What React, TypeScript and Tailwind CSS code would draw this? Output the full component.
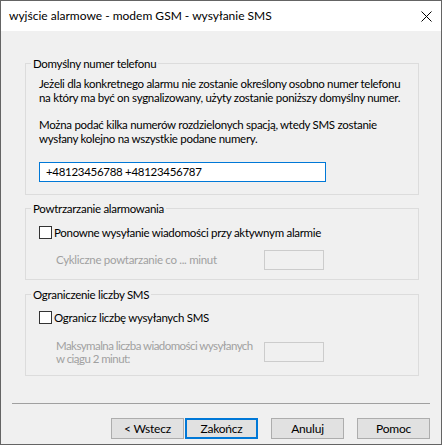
import React from "react";

const font = { fontFamily: 'Lato, "Noto Sans", sans-serif' };

function Checkbox() {
  return <span className="inline-block w-[13px] h-[13px] border border-[#333333] bg-white shrink-0" />;
}

function Btn({ label, primary }: { label: string; primary?: boolean }) {
  return (
    <button
      className={
        "w-[73px] h-[21px] flex items-center justify-center bg-[#e1e1e1] text-[12px] tracking-[-0.2px] text-black " +
        (primary ? "border-2 border-[#0078d7]" : "border border-[#adadad]")
      }
    >
      {label}
    </button>
  );
}

function Group({ title, className, children }: { title: string; className: string; children: React.ReactNode }) {
  return (
    <div className={"relative ml-[24px] w-[394px] border border-[#dcdcdc] pl-[13px] " + className}>
      <span className="absolute -top-[8px] left-[5px] px-[2px] leading-[15px] bg-[#f0f0f0]">{title}</span>
      {children}
    </div>
  );
}

export default function App() {
  return (
    <div
      className="w-[442px] h-[445px] overflow-hidden border border-[#646464] flex flex-col bg-[#f0f0f0] text-[11.5px] tracking-[-0.3px] text-black whitespace-nowrap"
      style={font}
    >
      <div className="h-[30px] shrink-0 bg-white flex items-center justify-between pl-[8px] pr-[9px]">
        <span className="text-[12px] tracking-normal">wyjście alarmowe - modem GSM - wysyłanie SMS</span>
        <svg width="11" height="11" viewBox="0 0 11 11">
          <path d="M0.5 0.5 L10.5 10.5 M10.5 0.5 L0.5 10.5" stroke="#000" strokeWidth="1" />
        </svg>
      </div>
      <div className="flex-1 flex flex-col">
        <Group title="Domyślny numer telefonu" className="mt-[32px] pt-[13px] pb-[12px]">
          <p className="leading-[14px]">
            Jeżeli dla konkretnego alarmu nie zostanie określony osobno numer telefonu
            <br />
            na który ma być on sygnalizowany, użyty zostanie poniższy domyślny numer.
          </p>
          <p className="mt-[13px] leading-[14px]">
            Można podać kilka numerów rozdzielonych spacją, wtedy SMS zostanie
            <br />
            wysłany kolejno na wszystkie podane numery.
          </p>
          <div className="mt-[16px] w-[287px] h-[20px] border border-[#0078d7] bg-white flex items-center pl-[6px]">
            +48123456788 +48123456787
          </div>
        </Group>

        <Group title="Powtrzarzanie alarmowania" className="mt-[13px] pt-[16px] pb-[9px]">
          <div className="h-[15px] flex items-center gap-[2px]">
            <Checkbox />
            <span>Ponowne wysyłanie wiadomości przy aktywnym alarmie</span>
          </div>
          <div className="mt-[10px] flex items-center">
            <span className="ml-[17px] w-[208px] text-[#a0a0a0] leading-[14px]">Cykliczne powtarzanie co ... minut</span>
            <div className="w-[60px] h-[20px] border border-[#cccccc] bg-[#f0f0f0]" />
          </div>
        </Group>

        <Group title="Ograniczenie liczby SMS" className="mt-[14px] pt-[15px] pb-[10px]">
          <div className="h-[15px] flex items-center gap-[2px]">
            <Checkbox />
            <span>Ogranicz liczbę wysyłanych SMS</span>
          </div>
          <div className="mt-[14px] flex items-center">
            <span className="ml-[17px] w-[208px] text-[#a0a0a0] leading-[13px] tracking-[-0.55px]">
              Maksymalna liczba wiadomości wysyłanych
              <br />
              w ciągu 2 minut:
            </span>
            <div className="w-[60px] h-[20px] border border-[#cccccc] bg-[#f0f0f0]" />
          </div>
        </Group>

        <div className="mt-[27px] ml-[11px] w-[418px] h-px bg-[#a0a0a0]" />

        <div className="mt-[14px] flex justify-end pr-[11px]">
          <Btn label="< Wstecz" />
          <div className="w-[1px]" />
          <Btn label="Zakończ" primary />
          <div className="w-[13px]" />
          <Btn label="Anuluj" />
          <div className="w-[13px]" />
          <Btn label="Pomoc" />
        </div>
      </div>
    </div>
  );
}
